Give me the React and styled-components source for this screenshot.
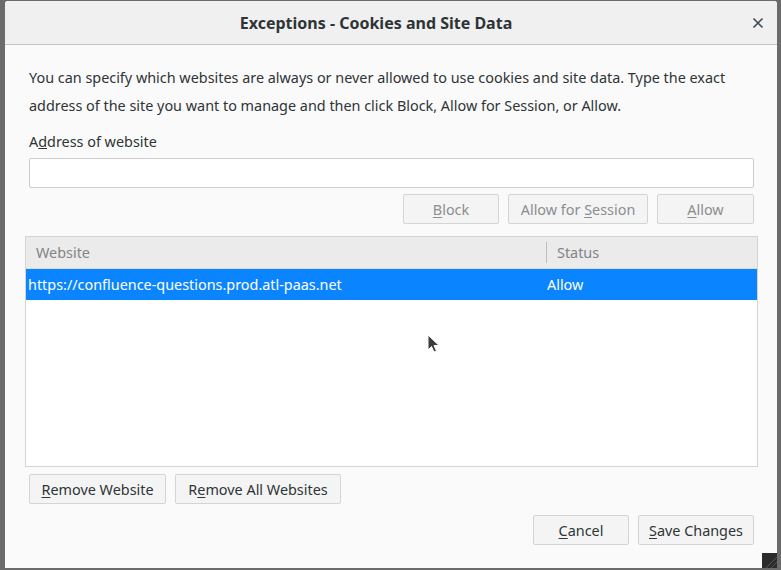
import React from "react"
import styled, { createGlobalStyle } from "styled-components"

const GlobalStyle = createGlobalStyle`
  html, body {
    margin: 0;
    padding: 0;
    background: #6b6b6b;
    font-family: "Noto Sans", "DejaVu Sans", sans-serif;
  }
`

const Screen = styled.div`
  width: 781px;
  height: 570px;
  padding: 1px 4px 2px 5px;
  box-sizing: border-box;
  display: flex;
`

const Dialog = styled.div`
  position: relative;
  flex: 1;
  display: flex;
  flex-direction: column;
  background: #fafafa;
  border-radius: 3px 3px 0 0;
  overflow: hidden;
`

const TitleBar = styled.div`
  height: 43px;
  flex-shrink: 0;
  display: flex;
  align-items: center;
  justify-content: center;
  background: #f0f0f0;
  border-bottom: 1px solid #c4c4c4;
  position: relative;
  padding-right: 30px;
`

const Title = styled.h1`
  margin: 0;
  font-size: 16px;
  font-weight: bold;
  color: #2e3436;
`

const Close = styled.button`
  position: absolute;
  right: 8px;
  top: 11px;
  width: 22px;
  height: 22px;
  border: none;
  background: none;
  padding: 0;
  display: flex;
  align-items: center;
  justify-content: center;
`

const Body = styled.div`
  flex: 1;
  display: flex;
  flex-direction: column;
  padding: 19px 23px 0 20px;
  color: #2e3436;
  font-size: 14.4px;
`

const Intro = styled.p`
  margin: 0 0 0 4px;
  line-height: 28px;
  white-space: nowrap;
`

const Label = styled.label`
  margin: 13px 0 0 4px;
  line-height: 18px;
`

const Input = styled.div`
  margin: 7px 0 0 4px;
  height: 28px;
  background: #fff;
  border: 1px solid #cdcdcd;
  border-radius: 2px;
`

const ActionRow = styled.div`
  display: flex;
  justify-content: ${p => p.$align || "flex-end"};
  gap: 9px;
  margin: ${p => p.$margin};
`

const Button = styled.button`
  height: 30px;
  width: ${p => p.$w}px;
  box-sizing: border-box;
  border: 1px solid #d4d4d4;
  border-radius: 2px;
  background: #f4f4f4;
  font-family: inherit;
  font-size: 14.4px;
  color: ${p => (p.disabled ? "#8b8e8f" : "#2e3436")};
  padding: 0;

  u {
    text-decoration: underline;
    text-underline-offset: 2px;
  }
`

const Table = styled.div`
  margin: 12px -4px 0 0;
  height: 229px;
  border: 1px solid #d4d4d4;
  background: #fff;
  display: flex;
  flex-direction: column;
`

const Row = styled.div`
  display: grid;
  grid-template-columns: 520px 1fr;
  height: 31px;
  align-items: center;
  background: ${p => (p.$head ? "#ebebeb" : p.$selected ? "#0b85ff" : "transparent")};
  color: ${p => (p.$head ? "#838383" : p.$selected ? "#fff" : "#2e3436")};
  border-bottom: ${p => (p.$head ? "1px solid #dcdcdc" : "none")};
`

const Cell = styled.div`
  padding-left: ${p => p.$pad}px;
  height: 100%;
  display: flex;
  align-items: center;
  box-sizing: border-box;
  white-space: nowrap;
`

const SepCell = styled(Cell)`
  position: relative;

  &::before {
    content: "";
    position: absolute;
    left: 0;
    top: 5px;
    bottom: 5px;
    width: 1px;
    background: #bdbdbd;
  }
`

const Cursor = styled.svg`
  position: absolute;
  left: 422px;
  top: 333px;
`

const Grip = styled.svg`
  position: absolute;
  right: 0;
  bottom: 0;
`

const App = () => (
  <>
    <GlobalStyle />
    <Screen>
      <Dialog>
        <TitleBar>
          <Title>Exceptions - Cookies and Site Data</Title>
          <Close aria-label="Close">
            <svg width="12" height="12" viewBox="0 0 12 12">
              <path d="M1.5 1.5 L10.5 10.5 M10.5 1.5 L1.5 10.5" stroke="#3d4a54" strokeWidth="1.6" />
            </svg>
          </Close>
        </TitleBar>
        <Body>
          <Intro>
            You can specify which websites are always or never allowed to use cookies and site data. Type the exact
            <br />
            address of the site you want to manage and then click Block, Allow for Session, or Allow.
          </Intro>
          <Label>
            A<u>d</u>dress of website
          </Label>
          <Input />
          <ActionRow $margin="6px 0 0 0">
            <Button disabled $w={96}><u>B</u>lock</Button>
            <Button disabled $w={140}>Allow for <u>S</u>ession</Button>
            <Button disabled $w={97}><u>A</u>llow</Button>
          </ActionRow>
          <Table>
            <Row $head>
              <Cell $pad={10}>Website</Cell>
              <SepCell $pad={11}>Status</SepCell>
            </Row>
            <Row $selected>
              <Cell $pad={2}>https://confluence-questions.prod.atl-paas.net</Cell>
              <Cell $pad={1}>Allow</Cell>
            </Row>
          </Table>
          <ActionRow $align="flex-start" $margin="7px 0 0 4px">
            <Button $w={137}><u>R</u>emove Website</Button>
            <Button $w={166}>R<u>e</u>move All Websites</Button>
          </ActionRow>
          <ActionRow $margin="11px 0 0 0">
            <Button $w={96}><u>C</u>ancel</Button>
            <Button $w={116}><u>S</u>ave Changes</Button>
          </ActionRow>
        </Body>
        <Cursor width="14" height="20" viewBox="0 0 14 20">
          <path d="M1 1 L1 16 L4.5 12.5 L7 18 L9.5 17 L7 11.5 L12 11.5 Z" fill="#3c3c3c" stroke="#fff" strokeWidth="1" />
        </Cursor>
        <Grip width="15" height="15" viewBox="0 0 15 15">
          <rect width="15" height="15" fill="#2b2b2b" />
          <path d="M15 4 L4 15 M15 9 L9 15" stroke="#555" strokeWidth="1" />
        </Grip>
      </Dialog>
    </Screen>
  </>
)

export default App
